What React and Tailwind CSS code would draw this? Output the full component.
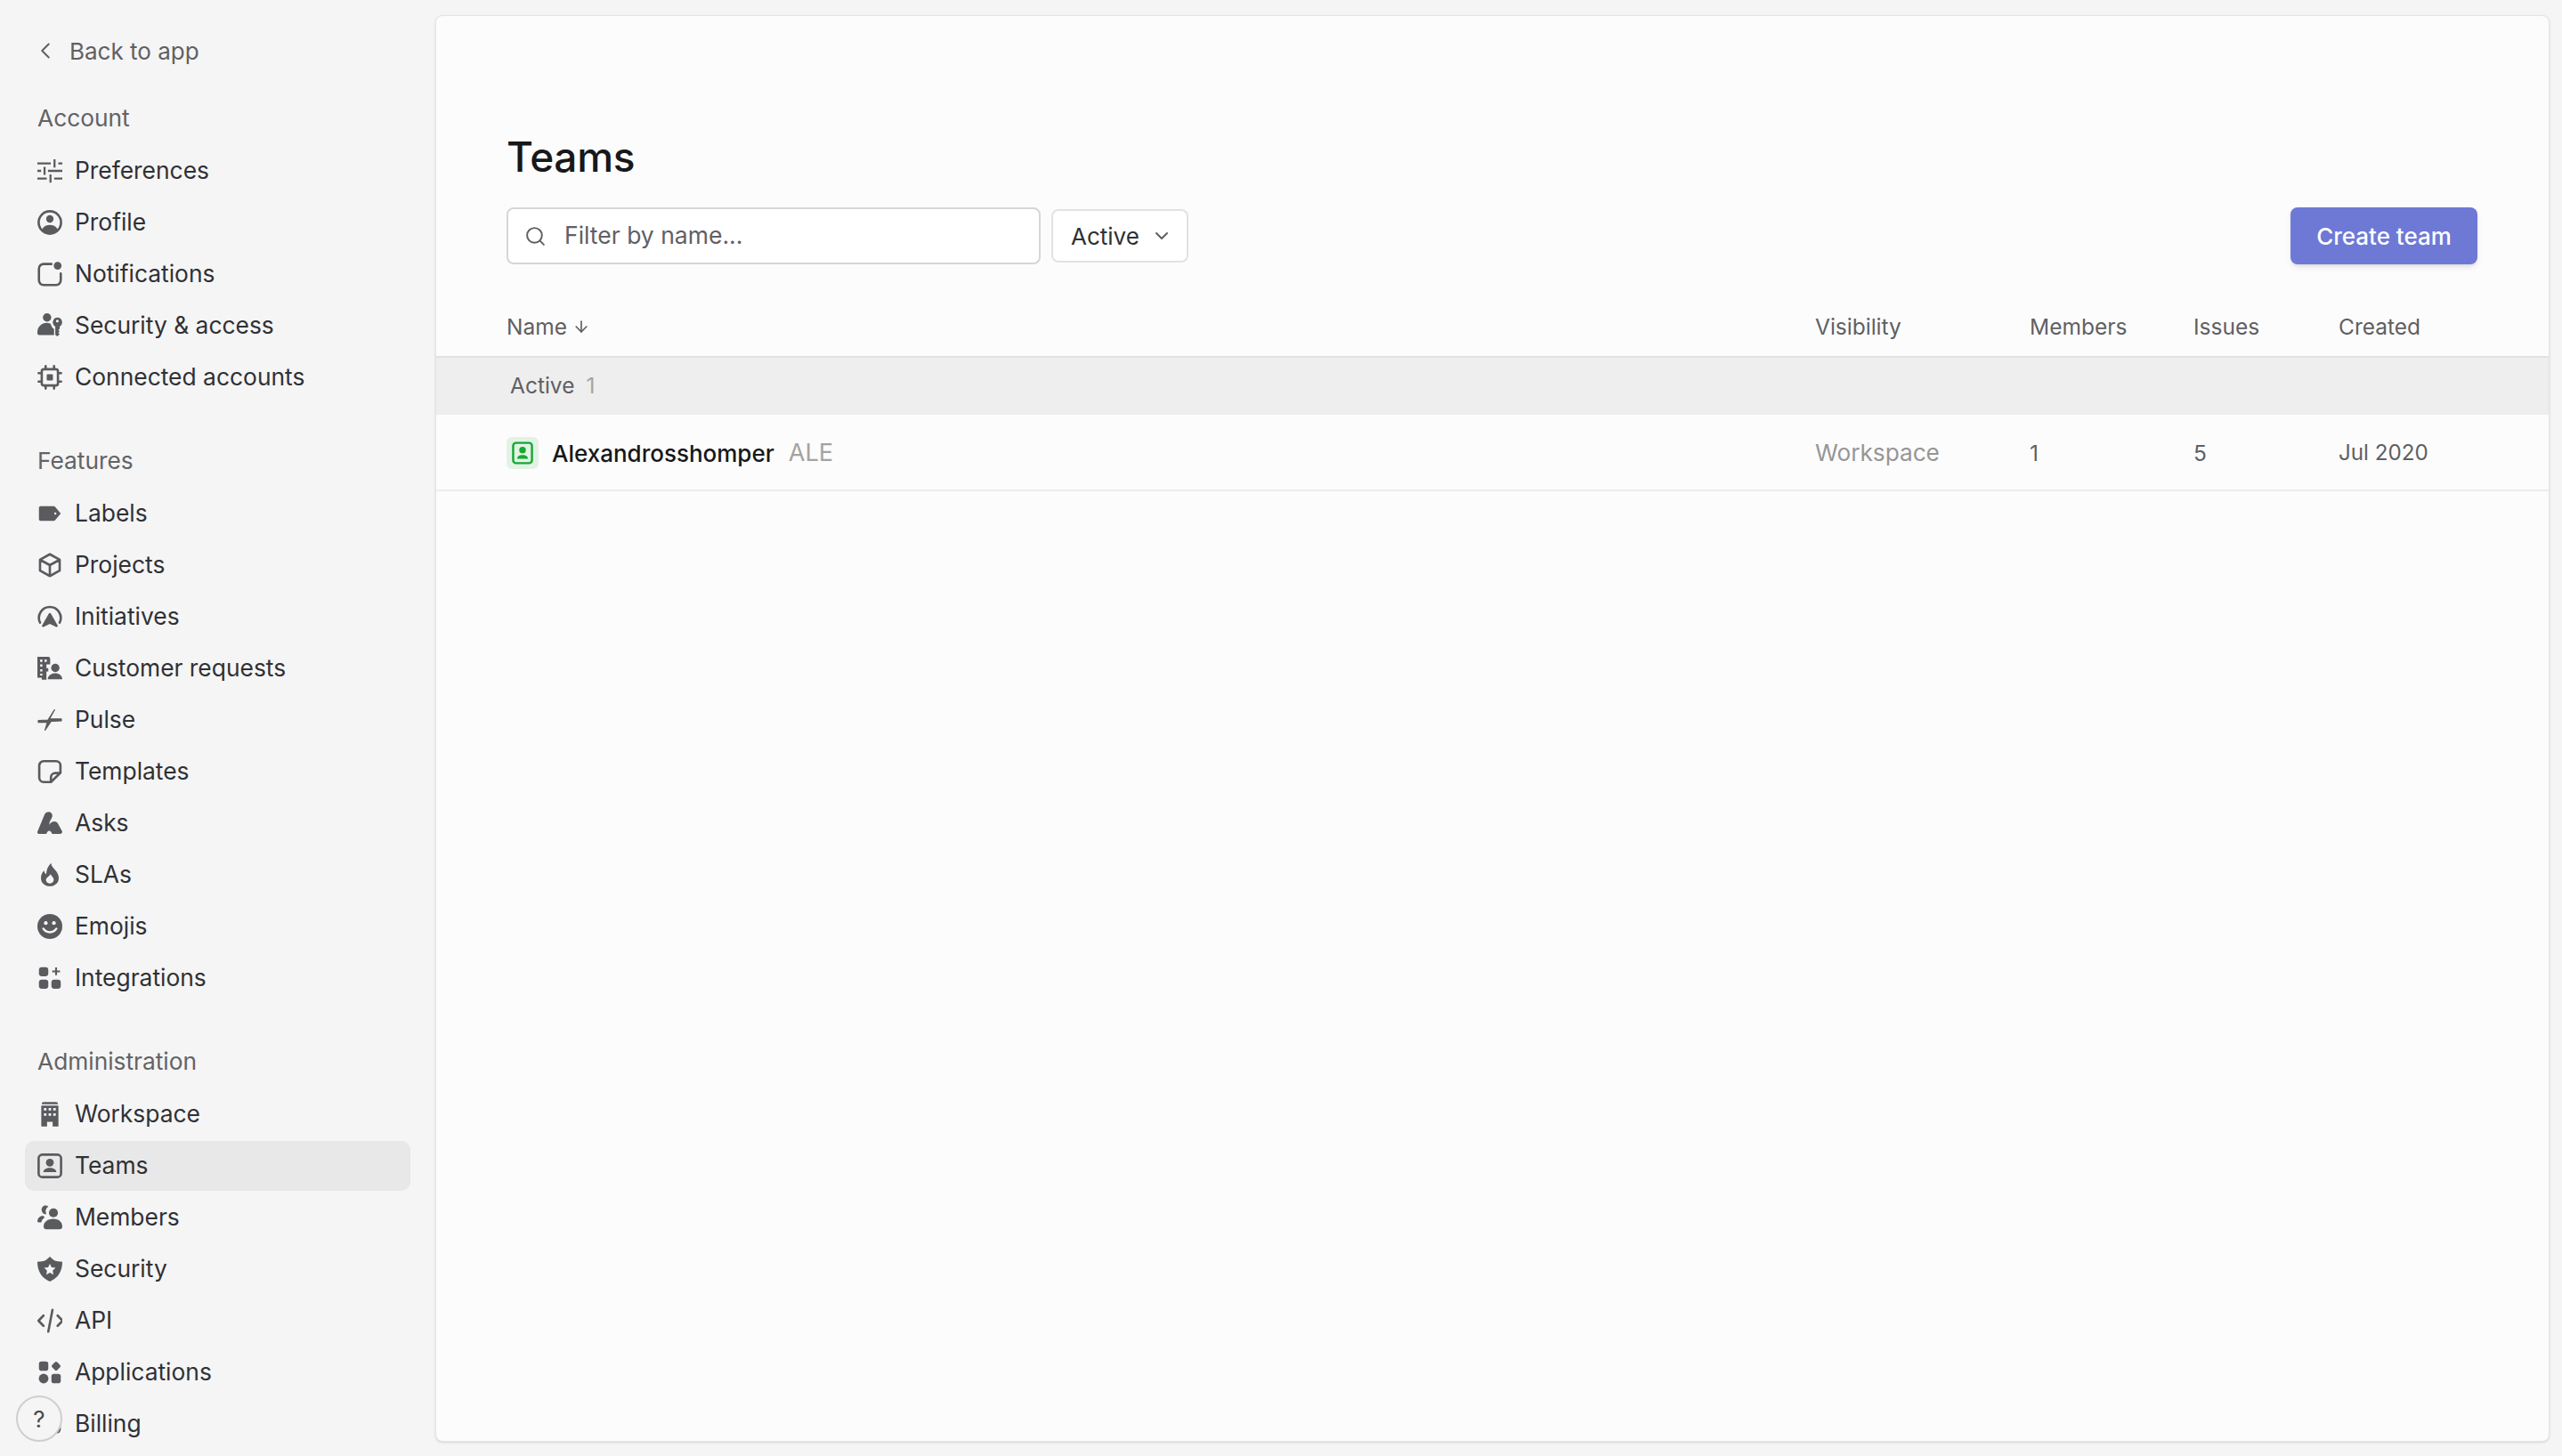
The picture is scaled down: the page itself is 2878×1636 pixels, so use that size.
import React from "react";
import { ChevronLeft, ChevronDown, Search, ArrowDown } from "lucide-react";

const BG = "#f5f5f5";

// 16x16 icons, drawn to match the settings sidebar
const Svg = ({ children }) => (
  <svg viewBox="0 0 16 16" className="w-[28px] h-[28px] shrink-0 text-[#5a5b5e]" fill="currentColor">
    {children}
  </svg>
);
const Line = (props) => <path fill="none" stroke="currentColor" strokeWidth="1.5" strokeLinecap="round" strokeLinejoin="round" {...props} />;

const PreferencesIcon = () => (
  <Svg>
    <path fill="none" stroke="currentColor" strokeWidth="1.3" d="M0 3.200H8.600M13.400 3.200H16M11 .6V5.800M0 8H2.400M6.800 8H16M4.600 5.400V10.600M0 12.900H6M10.800 12.900H16M8.400 10.300V15.500" />
  </Svg>
);
const ProfileIcon = () => (
  <Svg>
    <circle cx="8" cy="8" r="7.200" fill="none" stroke="currentColor" strokeWidth="1.500" />
    <circle cx="8" cy="5.700" r="2.400" />
    <path d="M2.900 12.600C3.800 10.600 5.800 9.600 8 9.600s4.200 1 5.100 3A6.900 6.900 0 0 1 2.900 12.600z" />
  </Svg>
);
const NotificationsIcon = () => (
  <Svg>
    <Line d="M9 1.500H4.200A3 3 0 0 0 1 4.500V11.800A3 3 0 0 0 4 15H12A3 3 0 0 0 15 11.800V7.600" />
    <circle cx="13" cy="2.600" r="2.500" />
  </Svg>
);
const SecurityAccessIcon = () => (
  <Svg>
    <circle cx="6.200" cy="2.700" r="2.700" />
    <path d="M0 12.200C0 8.800 2.800 6.200 6 6.200c.9 0 1.800.2 2.600.6.200 1.400 1 2.600 2.100 3.200V14H1.200A1.200 1.200 0 0 1 0 12.800z" />
    <path fillRule="evenodd" d="M12.800 2.700a3.100 3.100 0 0 1 1.500 5.800V10l-.9.800.9.800-.9.900.9.900-1.500 1.500-1.300-1V8.500A3.100 3.100 0 0 1 12.800 2.700zM12.800 4.100a.9.900 0 1 0 0 1.800.9.900 0 0 0 0-1.800z" />
  </Svg>
);
const ConnectedIcon = () => (
  <Svg>
    <rect x="2.800" y="2.800" width="10.400" height="10.400" rx="1.400" fill="none" stroke="currentColor" strokeWidth="1.500" />
    <rect x="6" y="6" width="4" height="4" rx=".6" />
    <path fill="none" stroke="currentColor" strokeWidth="1.500" strokeLinecap="round" d="M5.300 .8V2.500M10.700 .8V2.500M5.300 13.500V15.200M10.700 13.500V15.200M.8 5.300H2.500M.8 10.700H2.500M13.500 5.300H15.200M13.500 10.700H15.200" />
  </Svg>
);
const LabelsIcon = () => (
  <Svg>
    <path fillRule="evenodd" d="M2 3.300H10.400a1.500 1.500 0 0 1 1.100.5L15 8l-3.500 4.200a1.500 1.500 0 0 1-1.100.5H2a1 1 0 0 1-1-1V4.300a1 1 0 0 1 1-1zM11.500 7.300a.7.700 0 1 0 0 1.400.7.700 0 0 0 0-1.400z" />
  </Svg>
);
const ProjectsIcon = () => (
  <Svg>
    <Line d="M8 1L14.300 4.500V11.500L8 15L1.700 11.500V4.500ZM2 4.700L8 8L14 4.700M8 8V14.800" />
  </Svg>
);
const InitiativesIcon = () => (
  <Svg>
    <Line d="M1.700 11.800A7 7 0 1 1 14.300 11.800" />
    <path d="M8 5.600a.7.700 0 0 1 .6.300L13 13.500a.7.700 0 0 1-.9 1L8 12.600 3.900 14.500a.7.700 0 0 1-.9-1L7.400 5.900a.7.700 0 0 1 .6-.3z" />
  </Svg>
);
const CustomerIcon = () => (
  <Svg>
    <path fillRule="evenodd" d="M0 .5H7a1.200 1.200 0 0 1 1.200 1.200V5.400H5.800V7.800H7V10H5.800V15.300H2.800V14H0zM1.800 2.300V3.800H3.200V2.300zM4.600 2.300V3.800H6V2.300zM1.800 5.400V6.900H3.200V5.400zM1.800 8.500V10H3.200V8.500zM1.800 11.400V12.600H3.200V11.400z" />
    <circle cx="11.500" cy="7.700" r="2.700" />
    <path d="M6.600 15C6.800 12.400 9 11.100 11.500 11.100s4.300 1.300 4.500 3.900z" />
  </Svg>
);
const PulseIcon = () => (
  <Svg>
    <path d="M11 1.500L7.800 7.300H15.400V8.500L8.800 8.800L4.900 14.500L6.400 9.500H.6V8.400L6.800 8Z" stroke="currentColor" strokeWidth=".7" strokeLinejoin="round" />
  </Svg>
);
const TemplatesIcon = () => (
  <Svg>
    <Line d="M4 1.300H12A2.800 2.800 0 0 1 14.800 4.100V8.700L8.700 14.700H4A2.800 2.800 0 0 1 1.200 12V4.100A2.800 2.800 0 0 1 4 1.300Z" />
    <Line d="M8.700 14.500V11.500A2.800 2.800 0 0 1 11.500 8.900H14.600" />
  </Svg>
);
const AsksIcon = () => (
  <Svg>
    <path d="M1 14.800a1 1 0 0 1-.9-1.500L4.600 2.400C5.200 1.200 6.200.7 7.200.7C8.800.7 10 2.200 9.500 3.900C9.200 4.900 8.600 5.800 8 6.800L7.500 9C8.400 7.800 9.600 6.900 10.900 6.900C12 6.900 12.800 7.500 13.300 8.400L15.800 13a1.200 1.200 0 0 1-1 1.800H9.400C9 13.600 8.400 12.800 7.600 12.800C6.800 12.800 6.200 13.600 5.800 14.800Z" />
  </Svg>
);
const SlasIcon = () => (
  <Svg>
    <path fillRule="evenodd" d="M8.800 .4C9 3 11 4 12.300 6C13.400 7.600 13.700 9 13.700 10.100C13.700 13.100 11.200 15.300 8 15.300C4.800 15.300 2.300 13.100 2.300 10.100C2.300 8 3 6.600 4.200 5.300C4.600 6.600 5 7.300 5.700 7.600C5.700 5 6.800 2.300 8.800 .4ZM8 13.500C9.500 13.500 10.500 12.400 10.500 11.100C10.500 9.800 9.300 9 8.400 7.500C7.600 9 5.500 9.800 5.500 11.100C5.500 12.400 6.500 13.500 8 13.500Z" />
  </Svg>
);
const EmojisIcon = () => (
  <Svg>
    <circle cx="8" cy="8" r="8" />
    <circle cx="5.400" cy="5.800" r="1.200" fill={BG} />
    <circle cx="10.600" cy="5.800" r="1.200" fill={BG} />
    <path fill="none" stroke={BG} strokeWidth="1.400" strokeLinecap="round" d="M3.800 9.400C4.800 11 6.200 11.700 8 11.700s3.200-.7 4.200-2.300" />
  </Svg>
);
const IntegrationsIcon = () => (
  <Svg>
    <rect x="1" y="1" width="6" height="5.800" rx="1.800" />
    <rect x="1" y="9" width="6" height="5.800" rx="1.800" />
    <rect x="9" y="9" width="6" height="5.800" rx="1.800" />
    <path fill="none" stroke="currentColor" strokeWidth="1.200" d="M12 1.200V6.200M9.500 3.700H14.500" />
  </Svg>
);
const WorkspaceIcon = () => (
  <Svg>
    <path d="M4 .2H12a1.200 1.200 0 0 1 1.200 1.300H2.800A1.200 1.200 0 0 1 4 .2z" />
    <path fillRule="evenodd" d="M2.500 2.400H13.500V15.800H9.800V12.800H6.200V15.800H2.500zM4.200 4V5.600H5.800V4zM7.200 4V5.600H8.800V4zM10.200 4V5.600H11.800V4zM4.200 7.400V9H5.800V7.400zM7.200 7.400V9H8.800V7.400zM10.200 7.400V9H11.800V7.400z" />
  </Svg>
);
const TeamsIcon = () => (
  <Svg>
    <rect x=".8" y=".8" width="14.400" height="14.400" rx="2.400" fill="none" stroke="currentColor" strokeWidth="1.500" />
    <circle cx="8" cy="5.900" r="2.500" />
    <path d="M3.800 12C4 10.200 5.800 9.300 8 9.300s4 .9 4.200 2.700z" />
  </Svg>
);
const MembersIcon = () => (
  <Svg>
    <path d="M5.800 5.900A2.900 2.900 0 0 1 4 .6c1-.5 2.200-.3 3 .4a4 4 0 0 0-1.200 4.900z" />
    <path d="M0 10.600C0 8.500 1.600 7 3.700 6.900l1 1.100C3.600 8.700 2.800 9.800 2.500 11.100H1a1 1 0 0 1-1-.5z" />
    <circle cx="10.300" cy="5" r="2.900" />
    <path d="M4 13.800C4 10.900 6.700 8.900 10.200 8.900s5.800 2 5.800 4.900c0 1-.7 1.700-1.700 1.700H5.700C4.700 15.500 4 14.800 4 13.800z" />
  </Svg>
);
const SecurityIcon = () => (
  <Svg>
    <path fillRule="evenodd" d="M8 0L10.400 2.200C11.800 3 13.800 3.300 16 3.300C16 9 13.400 13.800 8 16C2.600 13.800 0 9 0 3.300C2.200 3.300 4.200 3 5.600 2.200ZM8 4.500L6.900 6.900L4.300 7.200L6.200 9L5.700 11.600L8 10.300L10.300 11.600L9.800 9L11.700 7.200L9.100 6.900Z" />
  </Svg>
);
const ApiIcon = () => (
  <Svg>
    <Line d="M3.900 4.700L.7 8L3.900 11.300M13 4.700L16.200 8L13 11.300M9.700 1L7 15" />
  </Svg>
);
const ApplicationsIcon = () => (
  <Svg>
    <rect x="1" y="1" width="6" height="6" rx="1.600" />
    <rect x="9.700" y="1.700" width="4.600" height="4.600" rx="1" transform="rotate(45 12 4)" />
    <circle cx="4" cy="12" r="3.100" />
    <rect x="9" y="9" width="6" height="6" rx="1.600" />
  </Svg>
);
const BillingIcon = () => (
  <Svg>
    <rect x="1" y="2" width="14" height="12" rx="2.400" />
  </Svg>
);

const sections = [
  {
    title: "Account",
    items: [
      ["Preferences", PreferencesIcon],
      ["Profile", ProfileIcon],
      ["Notifications", NotificationsIcon],
      ["Security & access", SecurityAccessIcon],
      ["Connected accounts", ConnectedIcon],
    ],
  },
  {
    title: "Features",
    items: [
      ["Labels", LabelsIcon],
      ["Projects", ProjectsIcon],
      ["Initiatives", InitiativesIcon],
      ["Customer requests", CustomerIcon],
      ["Pulse", PulseIcon],
      ["Templates", TemplatesIcon],
      ["Asks", AsksIcon],
      ["SLAs", SlasIcon],
      ["Emojis", EmojisIcon],
      ["Integrations", IntegrationsIcon],
    ],
  },
  {
    title: "Administration",
    items: [
      ["Workspace", WorkspaceIcon],
      ["Teams", TeamsIcon],
      ["Members", MembersIcon],
      ["Security", SecurityIcon],
      ["API", ApiIcon],
      ["Applications", ApplicationsIcon],
      ["Billing", BillingIcon],
    ],
  },
];

function Sidebar() {
  return (
    <aside className="w-[489px] shrink-0 h-full overflow-hidden px-[28px] pt-[37px]">
      <div className="flex items-center h-[40px] pl-[8px] gap-[12px] text-[26px] text-[#5f6064]">
        <ChevronLeft className="w-[30px] h-[30px]" strokeWidth={1.6} />
        Back to app
      </div>
      <div className="flex flex-col gap-[43px] mt-[35px]">
        {sections.map((section) => (
          <div key={section.title}>
            <div className="h-[40px] pt-[1px] flex items-center pl-[14px] mb-[12px] text-[26.3px] text-[#626366]">{section.title}</div>
            {section.items.map(([label, Icon]) => (
              <div
                key={label}
                className={
                  label === "Teams"
                    ? "flex items-center h-[56px] mb-[2px] pl-[14px] gap-[14px] rounded-[10px] bg-[#e8e8e8] text-[26.4px] text-[#303135]"
                    : "flex items-center h-[56px] mb-[2px] pl-[14px] gap-[14px] rounded-[10px] text-[26.4px] text-[#303135]"
                }
              >
                <Icon />
                {label}
              </div>
            ))}
          </div>
        ))}
      </div>
    </aside>
  );
}

const cols = "grid grid-cols-[1fr_241px_184px_163px_236px] items-center pl-[79px]";

function TeamsPanel() {
  return (
    <main className="flex-1 mt-[17px] mb-[16px] mr-[14px] rounded-[8px] border border-[#e4e4e4] bg-[#fcfcfc] shadow-sm overflow-hidden">
      <h1 className="pl-[79px] pt-[128px] h-[190px] text-[46px] leading-[60px] font-medium text-[#17181a] tracking-[-0.3px]">Teams</h1>
      <div className="flex items-center h-[64px] mt-[25px] pl-[79px] pr-[80px]">
        <div className="flex items-center w-[600px] h-[64px] rounded-[8px] border-2 border-[#d6d6d6] bg-white pl-[18px] gap-[20px] text-[26.5px] text-[#5f6064]">
          <Search className="w-[25px] h-[25px] text-[#5f6064]" strokeWidth={1.9} />
          Filter by name...
        </div>
        <div className="flex items-center justify-between w-[154px] h-[60px] ml-[12px] rounded-[8px] border-2 border-[#e2e2e2] bg-white pl-[20px] pr-[16px] text-[26px] text-[#303135]">
          Active
          <ChevronDown className="w-[24px] h-[24px] text-[#5f6064]" strokeWidth={2} />
        </div>
        <button className="ml-auto w-[210px] h-[64px] rounded-[8px] bg-[#6e79d6] text-[26px] font-medium text-white shadow-md">Create team</button>
      </div>
      <div className={`${cols} h-[70px] pt-[2px] mt-[35px] border-b-2 border-[#e2e2e2] text-[24.500px] text-[#5f6064]`}>
        <div className="flex items-center gap-[6px]">
          Name
          <ArrowDown className="w-[20px] h-[20px]" strokeWidth={2} />
        </div>
        <div>Visibility</div>
        <div>Members</div>
        <div>Issues</div>
        <div>Created</div>
      </div>
      <div className="flex items-center h-[62px] pl-[83px] gap-[13px] bg-[#eeeeee] text-[24.500px] text-[#5f6064]">
        Active
        <span className="text-[#a3a3a3]">1</span>
      </div>
      <div className={`${cols} h-[88px] pt-[2px] border-y-2 border-[#ededed] text-[24.500px] text-[#5f6064]`}>
        <div className="flex items-center">
          <div className="flex items-center justify-center w-[36px] h-[36px] rounded-[6px] bg-[#e2f3e5]">
            <svg viewBox="0 0 16 16" className="w-[26px] h-[26px] text-[#16a832]" fill="currentColor">
              <rect x="1.500" y="1" width="13" height="14" rx="2" fill="none" stroke="currentColor" strokeWidth="1.500" />
              <circle cx="8" cy="6" r="2.300" />
              <path d="M4.200 12C4.400 10.200 6 9.400 8 9.400s3.600.8 3.800 2.600z" />
            </svg>
          </div>
          <span className="ml-[15px] text-[26px] font-[450] text-[#17181a]">Alexandrosshomper</span>
          <span className="ml-[16px] text-[27px] text-[#a3a3a3]">ALE</span>
        </div>
        <div className="text-[26.200px] text-[#969696]">Workspace</div>
        <div>1</div>
        <div>5</div>
        <div className="text-[24.200px]">Jul 2020</div>
      </div>
    </main>
  );
}

export default function App() {
  return (
    <div className="relative flex h-screen overflow-hidden bg-[#f5f5f5] font-[Inter,sans-serif]">
      <Sidebar />
      <TeamsPanel />
      <button className="absolute left-[18px] top-[1568px] w-[52px] h-[52px] rounded-full border-2 border-[#cfcfcf] bg-[#f5f5f5] text-[26px] text-[#4a4b4e]">?</button>
    </div>
  );
}
